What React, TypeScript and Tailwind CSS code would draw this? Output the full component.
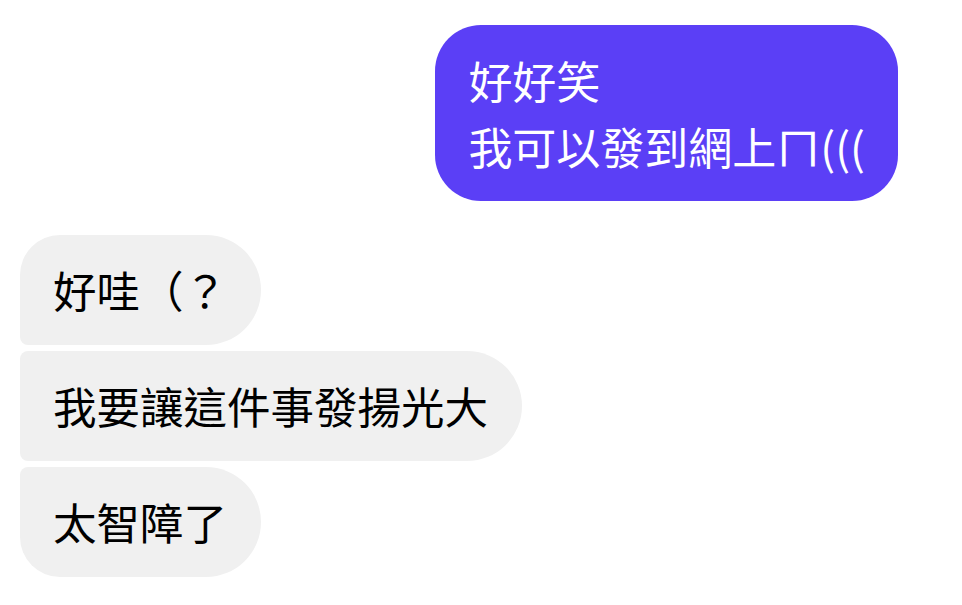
const font = { fontFamily: '"Noto Sans CJK TC", "Noto Sans", sans-serif' };

const received = [
  { text: "好哇（？", shape: "rounded-tl-[40px] rounded-bl-[8px]" },
  { text: "我要讓這件事發揚光大", shape: "rounded-tl-[8px] rounded-bl-[8px]" },
  { text: "太智障了", shape: "rounded-tl-[8px] rounded-bl-[40px]" },
];

export default function App() {
  return (
    <div className="w-[962px] h-[605px] bg-white overflow-hidden" style={font}>
      {/* sent */}
      <div className="flex justify-end pt-[25px] pr-[64px]">
        <div className="bg-[#5b3ff6] text-white rounded-[46px] px-[33px] py-[22px] text-[44px] leading-[66px]">
          <div>好好笑</div>
          <div>我可以發到網上ㄇ(((</div>
        </div>
      </div>

      {/* received */}
      <div className="flex flex-col items-start gap-[6px] pl-[20px] mt-[34px]">
        {received.map((m, i) => (
          <div
            key={i}
            className={`bg-[#f0f0f0] text-black rounded-tr-[55px] rounded-br-[55px] ${m.shape} pl-[33px] pr-[34px] py-[22px] text-[43.5px] leading-[66px]`}
          >
            {m.text}
          </div>
        ))}
      </div>
    </div>
  );
}
